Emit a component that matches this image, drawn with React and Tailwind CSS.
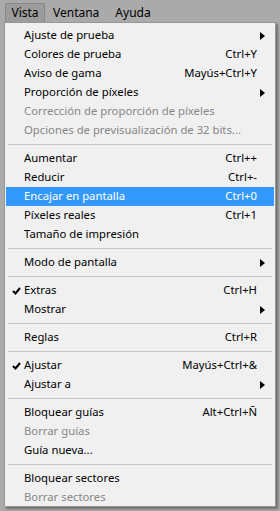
const items = [
  { label: "Ajuste de prueba", sub: true },
  { label: "Colores de prueba", key: "Ctrl+Y" },
  { label: "Aviso de gama", key: "Mayús+Ctrl+Y" },
  { label: "Proporción de píxeles", sub: true },
  { label: "Corrección de proporción de píxeles", off: true },
  { label: "Opciones de previsualización de 32 bits...", off: true },
  { sep: true },
  { label: "Aumentar", key: "Ctrl++" },
  { label: "Reducir", key: "Ctrl+-" },
  { label: "Encajar en pantalla", key: "Ctrl+0", active: true },
  { label: "Píxeles reales", key: "Ctrl+1" },
  { label: "Tamaño de impresión" },
  { sep: true },
  { label: "Modo de pantalla", sub: true },
  { sep: true },
  { label: "Extras", key: "Ctrl+H", check: true },
  { label: "Mostrar", sub: true },
  { sep: true },
  { label: "Reglas", key: "Ctrl+R" },
  { sep: true },
  { label: "Ajustar", key: "Mayús+Ctrl+&", check: true },
  { label: "Ajustar a", sub: true },
  { sep: true },
  { label: "Bloquear guías", key: "Alt+Ctrl+Ñ" },
  { label: "Borrar guías", off: true },
  { label: "Guía nueva..." },
  { sep: true },
  { label: "Bloquear sectores" },
  { label: "Borrar sectores", off: true },
];

function Arrow() {
  return (
    <svg width="5" height="8" viewBox="0 0 5 8" className="absolute right-[9px] top-[6px]">
      <path d="M0 0 L5 4 L0 8 Z" fill="currentColor" />
    </svg>
  );
}

function Check() {
  return (
    <svg width="9" height="8" viewBox="0 0 9 8" className="absolute left-[6px] top-[6px]">
      <path d="M1 4 L3.5 6.5 L8 1" stroke="currentColor" strokeWidth="2" fill="none" />
    </svg>
  );
}

export default function App() {
  return (
    <div
      className="w-[280px] h-[511px] bg-[#aaaaaa] overflow-hidden text-[11.3px] text-black"
      style={{ fontFamily: '"Noto Sans", "Open Sans", sans-serif' }}
    >
      <div className="flex h-[22px] items-end pl-[5px] text-[12px]">
        <div className="h-[19px] w-[40px] flex items-center justify-center bg-[#9c9c9c] border border-b-0 border-[#888] rounded-t-[2px]">
          Vista
        </div>
        <div className="h-[19px] flex items-center ml-[8px]">Ventana</div>
        <div className="h-[19px] flex items-center ml-[16px]">Ayuda</div>
      </div>
      <div className="ml-[4px] w-[272px] h-[485px] bg-[#f0f0f0] border border-[#979797] shadow-[2px_2px_2px_rgba(0,0,0,0.35)] pt-[3px]">
        {items.map((it, i) =>
          it.sep ? (
            <div key={i} className="h-[9px] flex items-center px-[3px]">
              <div className="w-full h-[2px] border-t border-[#c5c5c5] border-b-white" />
            </div>
          ) : (
            <div
              key={i}
              className={
                "relative h-[19px] flex items-center justify-between pl-[18px] pr-[17px] mx-[1px] whitespace-nowrap " +
                (it.active ? "bg-[#3399ff] text-white" : it.off ? "text-[#878787]" : "")
              }
            >
              {it.check && <Check />}
              <span>{it.label}</span>
              {it.key && <span>{it.key}</span>}
              {it.sub && <Arrow />}
            </div>
          )
        )}
      </div>
    </div>
  );
}
